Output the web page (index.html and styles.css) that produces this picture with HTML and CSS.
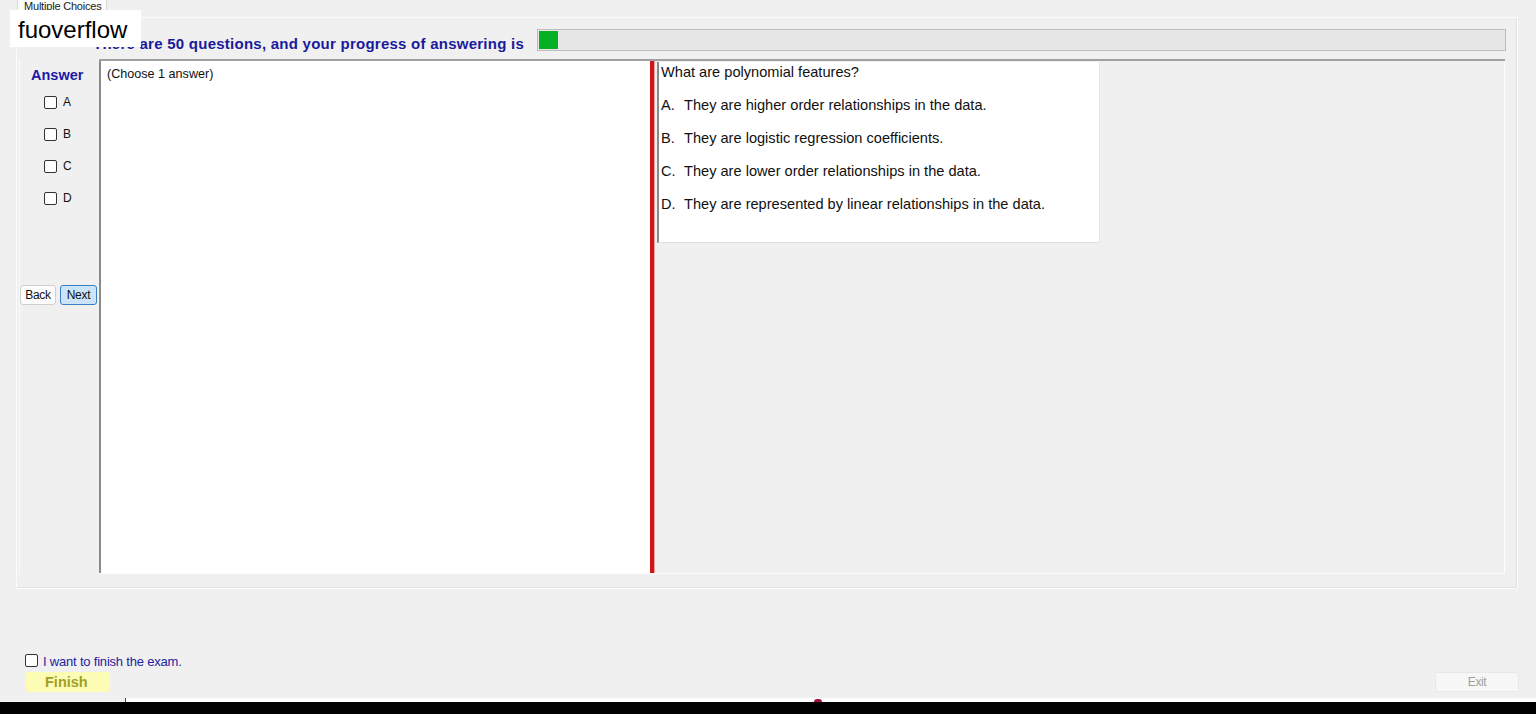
FILE: index.html
```html
<!DOCTYPE html>
<html>
<head>
<meta charset="utf-8">
<link rel="stylesheet" href="styles.css">
</head>
<body>
<div class="app">
  <div class="tabstrip"><div class="tab">Multiple Choices</div></div>
  <div class="tabpanel">
    <div class="header">
      <div class="title">There are 50 questions, and your progress of answering is</div>
      <div class="progress"><div class="fill" style="width:19px"></div></div>
    </div>
    <div class="content">
      <div class="answers">
        <div class="answer-label">Answer</div>
        <div class="opt"><span class="cb"></span><span>A</span></div>
        <div class="opt"><span class="cb"></span><span>B</span></div>
        <div class="opt"><span class="cb"></span><span>C</span></div>
        <div class="opt"><span class="cb"></span><span>D</span></div>
        <div class="navbtns">
          <div class="btn back">Back</div>
          <div class="btn next">Next</div>
        </div>
      </div>
      <div class="split">
        <div class="left-pane">(Choose 1 answer)</div>
        <div class="splitter"></div>
        <div class="right-pane">
          <div class="qbox">
            <div class="q">What are polynomial features?</div>
            <div class="q"><span class="let">A.</span>They are higher order relationships in the data.</div>
            <div class="q"><span class="let">B.</span>They are logistic regression coefficients.</div>
            <div class="q"><span class="let">C.</span>They are lower order relationships in the data.</div>
            <div class="q"><span class="let">D.</span>They are represented by linear relationships in the data.</div>
          </div>
        </div>
      </div>
    </div>
  </div>
  <div class="footer">
    <div class="footer-left">
      <div class="finish-check"><span class="cb"></span><span>I want to finish the exam.</span></div>
      <div class="finish">Finish</div>
    </div>
    <div class="exit">Exit</div>
  </div>
  <div class="strip"><div class="strip-gap"></div><div class="strip-white"><span class="dot"></span></div></div>
  <div class="taskbar"></div>
  <div class="watermark">fuoverflow</div>
</div>
</body>
</html>
```

FILE: styles.css
```css
* { box-sizing: border-box; }
html, body { margin: 0; padding: 0; }
body {
  background: #f0f0f0;
  font-family: "Liberation Sans", Arial, sans-serif;
  color: #000;
  overflow: hidden;
}
.app {
  position: relative;
  width: 1536px;
  height: 714px;
  display: flex;
  flex-direction: column;
}
.tabstrip {
  height: 17px;
  padding-left: 17px;
  display: flex;
}
.tab {
  width: 90px;
  height: 17px;
  background: #fbfbfb;
  border: 1px solid #dadada;
  border-bottom: none;
  border-top: none;
  font-size: 11px;
  line-height: 12px;
  color: #222;
  padding-left: 6px;
  letter-spacing: -0.2px;
  white-space: nowrap;
  overflow: hidden;
}
.tabpanel {
  margin-left: 16px;
  width: 1502px;
  height: 572px;
  border: 1px solid #fcfcfc;
  box-shadow: inset -1px -1px 0 #e2e2e2;
  display: flex;
  flex-direction: column;
}
.header {
  display: flex;
  margin-top: 11px;
  height: 22px;
}
.title {
  width: 520px;
  padding-left: 76px;
  padding-top: 6px;
  font-size: 15px;
  line-height: 17px;
  font-weight: bold;
  color: #1a1a9c;
  letter-spacing: 0.25px;
  white-space: nowrap;
  overflow: visible;
}
.progress {
  width: 969px;
  height: 22px;
  background: #e6e6e6;
  border: 1px solid #bcbcbc;
  padding: 1px;
}
.fill {
  height: 18px;
  background: #06b025;
}
.content {
  display: flex;
  margin-top: 8px;
  height: 515px;
}
.answers {
  width: 80px;
  margin-left: 2px;
  border-left: 1px solid #fafafa;
  display: flex;
  flex-direction: column;
}
.answer-label {
  padding-left: 11px;
  padding-top: 8px;
  font-size: 14.5px;
  line-height: 16px;
  font-weight: bold;
  color: #1a1aa6;
  height: 27px;
}
.opt {
  display: flex;
  align-items: center;
  height: 32px;
  padding-left: 24px;
  font-size: 12px;
  color: #111;
}
.opt span:last-child { margin-left: 6px; line-height: 13px; }
.cb {
  display: inline-block;
  width: 13px;
  height: 13px;
  border: 1px solid #333;
  border-radius: 2px;
  background: #fff;
}
.navbtns {
  display: flex;
  gap: 4px;
  margin-top: 71px;
}
.btn {
  height: 20px;
  font-size: 12px;
  line-height: 18px;
  text-align: center;
  border-radius: 3px;
  letter-spacing: -0.3px;
}
.back {
  width: 36px;
  background: #fdfdfd;
  border: 1px solid #d0d0d0;
  color: #111;
}
.next {
  width: 37px;
  background: #cce4f7;
  border: 1px solid #3a7fc0;
  color: #111;
}
.split {
  width: 1406px;
  height: 515px;
  display: flex;
  border-top: 2px solid #a0a0a0;
  border-bottom: 1px solid #fbfbfb;
}
.left-pane {
  width: 551px;
  background: #fff;
  border-left: 2px solid #8a8a8a;
  padding-left: 6px;
  padding-top: 6px;
  font-size: 12.6px;
  line-height: 14px;
  color: #111;
}
.splitter {
  width: 5px;
  background: #cf1515;
  border-right: 1px solid #e9a0a0;
}
.right-pane {
  flex: 1;
  background: #f0f0f0;
  border-right: 1px solid #fdfdfd;
  padding-left: 2px;
  padding-top: 1px;
}
.qbox {
  width: 443px;
  height: 181px;
  background: #fff;
  border-left: 2px solid #8a8a8a;
  border-bottom: 1px solid #e0e0e0;
  border-right: 1px solid #e6e6e6;
  padding-left: 2px;
  padding-top: 2px;
}
.q {
  font-size: 14.6px;
  line-height: 17px;
  margin-bottom: 16px;
  white-space: nowrap;
  color: #111;
}
.let {
  display: inline-block;
  width: 23px;
}
.footer {
  height: 109px;
  display: flex;
  justify-content: space-between;
  align-items: flex-end;
  padding-bottom: 6px;
}
.footer-left {
  padding-left: 25px;
  display: flex;
  flex-direction: column;
}
.finish-check {
  display: flex;
  align-items: center;
  height: 16px;
  margin-bottom: 2px;
  font-size: 13px;
  color: #2323a0;
  letter-spacing: -0.2px;
}
.finish-check span:last-child { margin-left: 5px; padding-top: 2px; }
.finish {
  margin-top: 2px;
  margin-left: 1px;
  width: 84px;
  height: 20px;
  background: #fcfcb4;
  border-radius: 2px;
  text-align: left;
  padding-left: 19px;
  font-size: 14.5px;
  font-weight: bold;
  line-height: 21px;
  color: #a0a024;
}
.exit {
  margin-right: 17px;
  width: 84px;
  height: 20px;
  background: #f7f7f7;
  border: 1px solid #e8e8e8;
  border-radius: 2px;
  text-align: center;
  font-size: 12px;
  line-height: 18px;
  color: #a0a0a0;
  letter-spacing: -0.4px;
}
.strip {
  height: 4px;
  display: flex;
}
.strip-gap {
  width: 126px;
  border-right: 1px solid #444;
}
.strip-white {
  flex: 1;
  background: #fff;
  position: relative;
}
.dot {
  position: absolute;
  left: 688px;
  top: 1px;
  width: 8px;
  height: 3px;
  background: #a01040;
  border-radius: 3px 3px 0 0;
}
.taskbar {
  height: 12px;
  background: #000;
}
.watermark {
  position: absolute;
  left: 10px;
  top: 10px;
  width: 131px;
  height: 37px;
  background: #fff;
  font-size: 24px;
  line-height: 39px;
  padding-left: 8px;
  color: #000;
}
```
